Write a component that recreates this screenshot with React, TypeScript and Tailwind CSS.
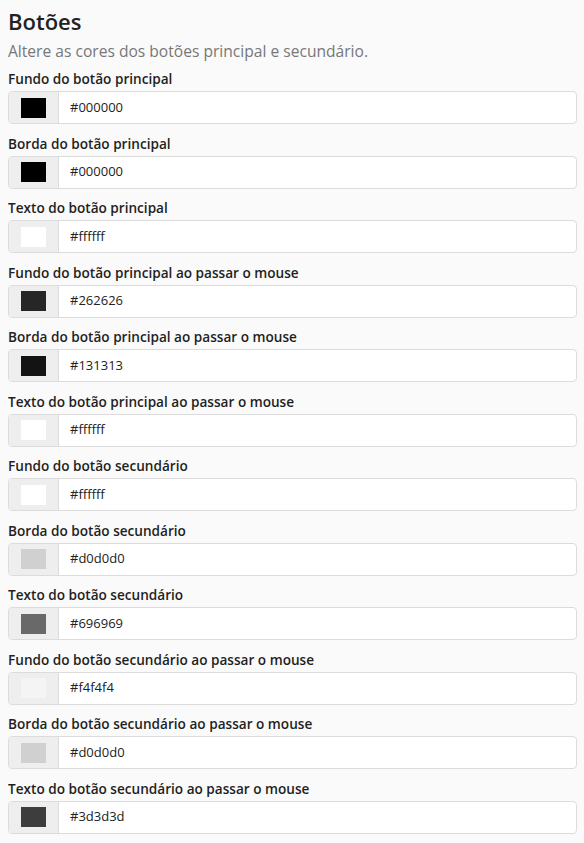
const FIELDS = [
  { label: "Fundo do botão principal", value: "#000000" },
  { label: "Borda do botão principal", value: "#000000" },
  { label: "Texto do botão principal", value: "#ffffff" },
  { label: "Fundo do botão principal ao passar o mouse", value: "#262626" },
  { label: "Borda do botão principal ao passar o mouse", value: "#131313" },
  { label: "Texto do botão principal ao passar o mouse", value: "#ffffff" },
  { label: "Fundo do botão secundário", value: "#ffffff" },
  { label: "Borda do botão secundário", value: "#d0d0d0" },
  { label: "Texto do botão secundário", value: "#696969" },
  { label: "Fundo do botão secundário ao passar o mouse", value: "#f4f4f4" },
  { label: "Borda do botão secundário ao passar o mouse", value: "#d0d0d0" },
  { label: "Texto do botão secundário ao passar o mouse", value: "#3d3d3d" },
];

function ColorField({ label, value }: { label: string; value: string }) {
  return (
    <div className="mb-[9.5px]">
      <label className="block text-[13.6px] leading-[20px] font-semibold text-[#1f1f1f] mb-[2px]">
        {label}
      </label>
      <div className="flex h-[33px] border border-[#dcdcdc] rounded-[4px] bg-white overflow-hidden">
        <div className="w-[50px] shrink-0 bg-[#eeeeee] border-r border-[#dcdcdc] flex items-center justify-center">
          <span className="block w-[25px] h-[20px]" style={{ backgroundColor: value }} />
        </div>
        <div className="flex items-center pl-[11px] text-[13px] text-[#222]">{value}</div>
      </div>
    </div>
  );
}

export default function App() {
  return (
    <div className="min-h-screen bg-[#fafafa] pl-2 pr-[7px] pt-[6px] font-['Open_Sans',sans-serif]">
      <h2 className="text-[22px] leading-[30px] font-semibold text-[#222]">Botões</h2>
      <p className="text-[15.6px] leading-[20px] text-[#777] mt-[5px] mb-[8px]">
        Altere as cores dos botões principal e secundário.
      </p>
      {FIELDS.map((f) => (
        <ColorField key={f.label} label={f.label} value={f.value} />
      ))}
    </div>
  );
}
